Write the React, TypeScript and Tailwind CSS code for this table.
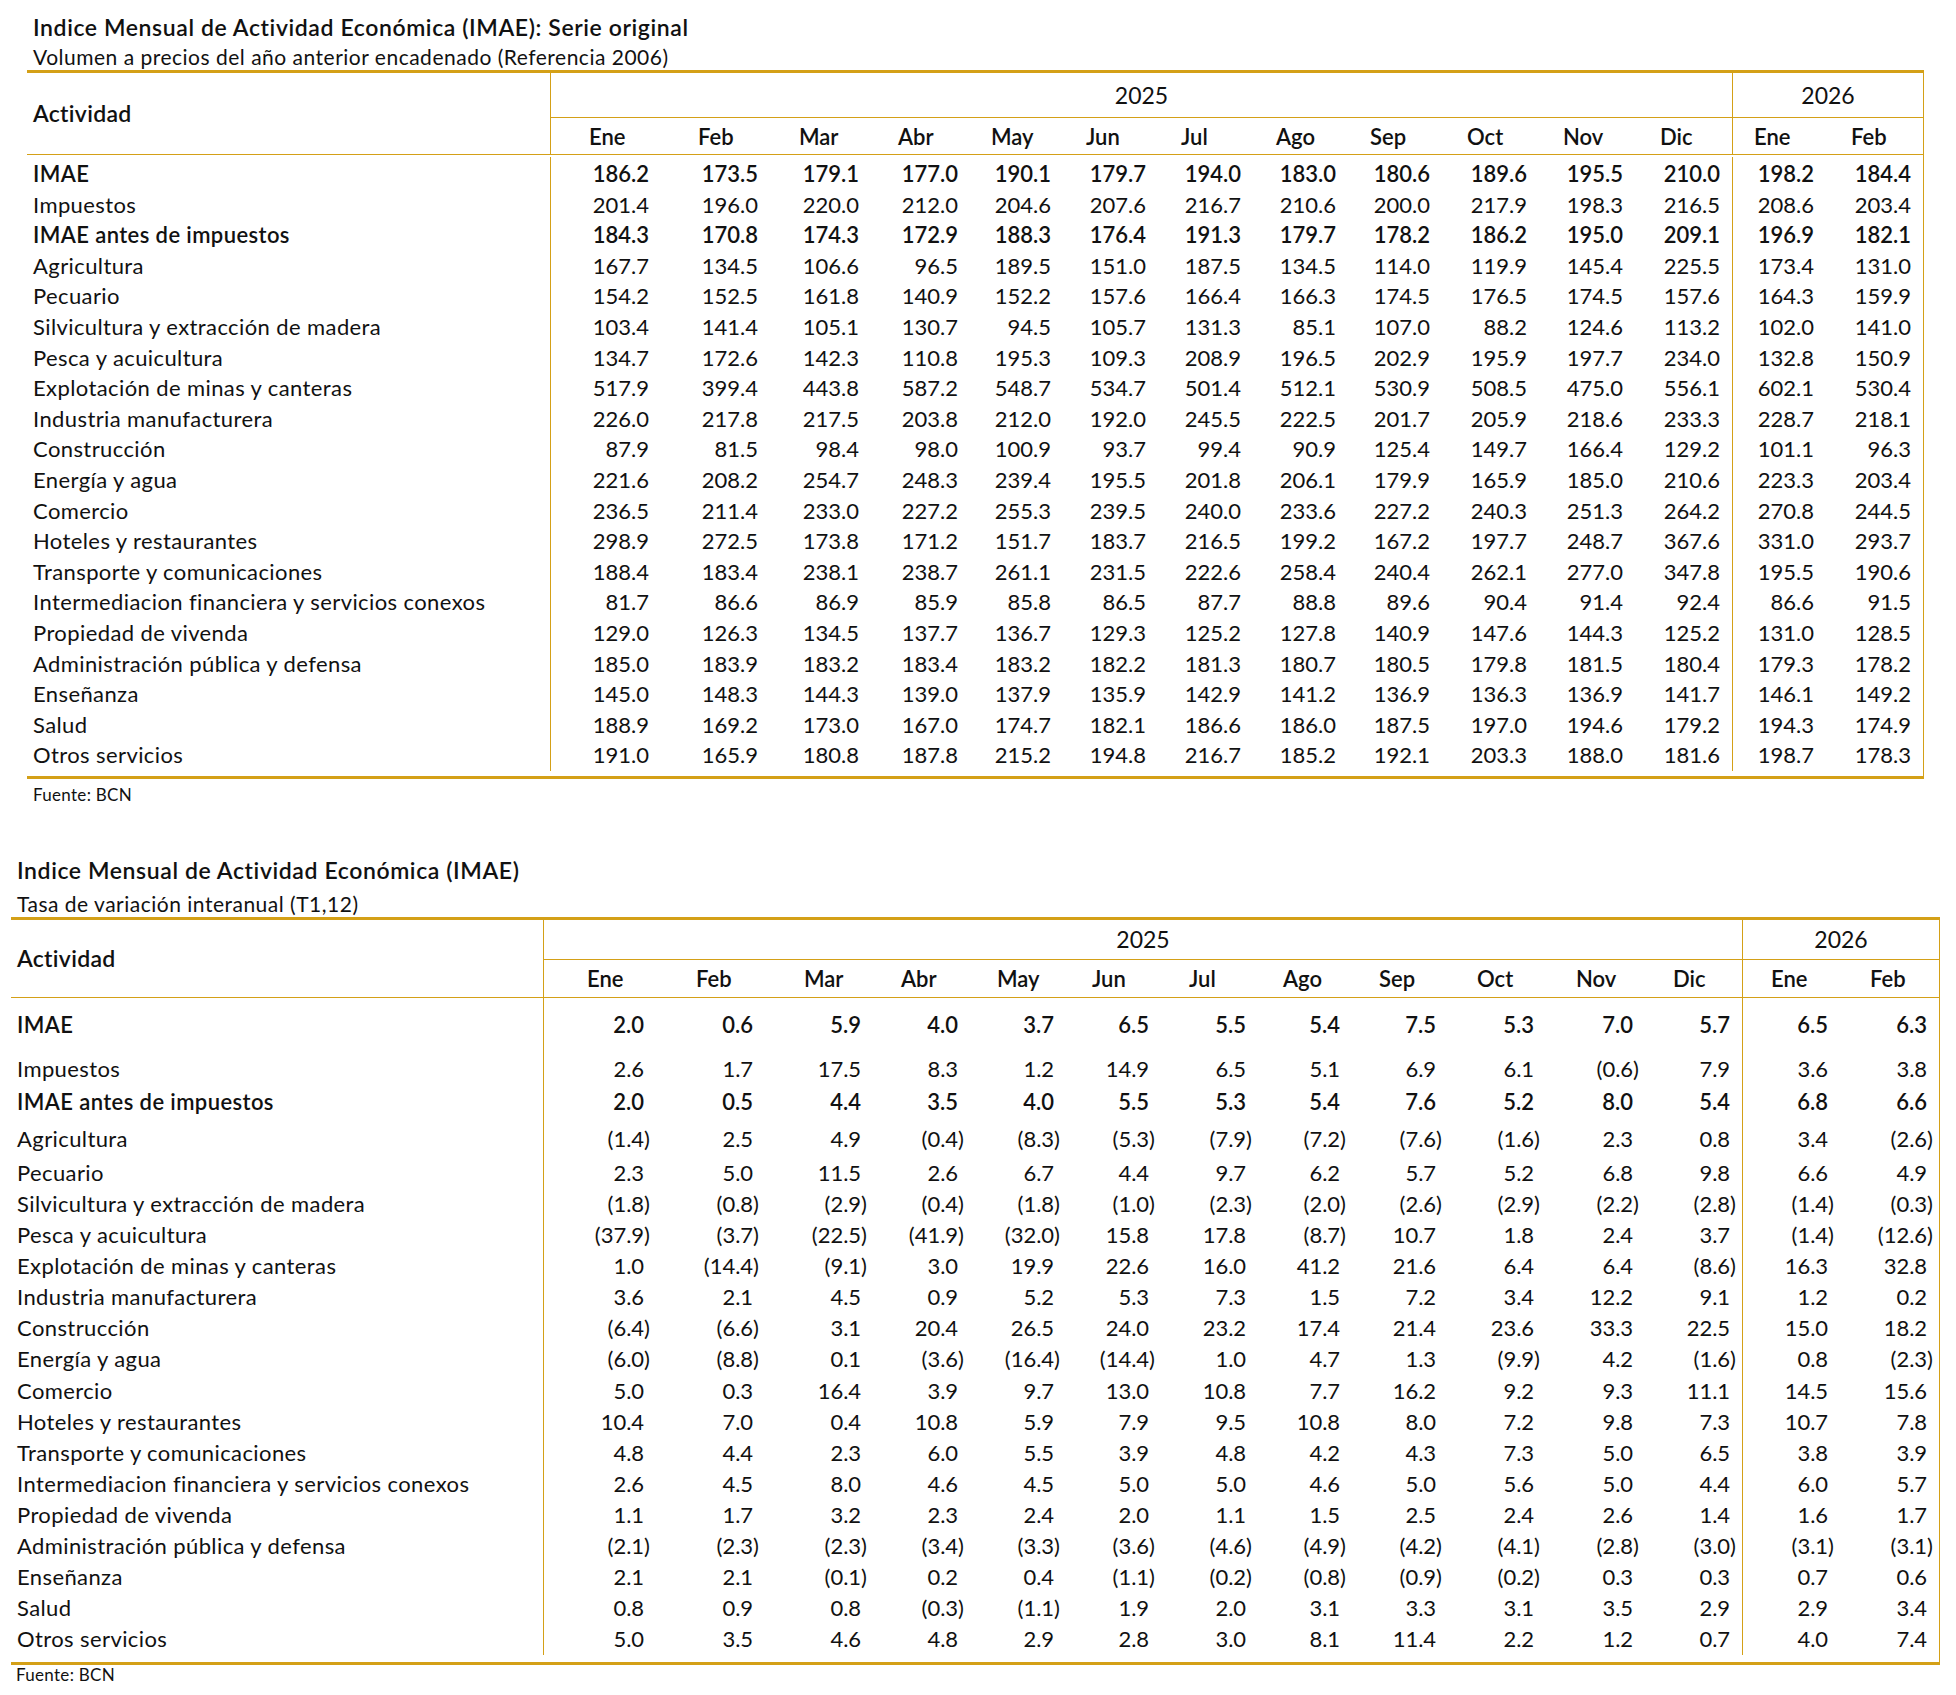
import React from "react";

type Row = { label: string; bold?: boolean; v: string };

const months = ["Ene", "Feb", "Mar", "Abr", "May", "Jun", "Jul", "Ago", "Sep", "Oct", "Nov", "Dic", "Ene", "Feb"];

const serie: Row[] = [
  { label: "IMAE", bold: true, v: "186.2 173.5 179.1 177.0 190.1 179.7 194.0 183.0 180.6 189.6 195.5 210.0 198.2 184.4" },
  { label: "Impuestos", v: "201.4 196.0 220.0 212.0 204.6 207.6 216.7 210.6 200.0 217.9 198.3 216.5 208.6 203.4" },
  { label: "IMAE antes de impuestos", bold: true, v: "184.3 170.8 174.3 172.9 188.3 176.4 191.3 179.7 178.2 186.2 195.0 209.1 196.9 182.1" },
  { label: "Agricultura", v: "167.7 134.5 106.6 96.5 189.5 151.0 187.5 134.5 114.0 119.9 145.4 225.5 173.4 131.0" },
  { label: "Pecuario", v: "154.2 152.5 161.8 140.9 152.2 157.6 166.4 166.3 174.5 176.5 174.5 157.6 164.3 159.9" },
  { label: "Silvicultura y extracción de madera", v: "103.4 141.4 105.1 130.7 94.5 105.7 131.3 85.1 107.0 88.2 124.6 113.2 102.0 141.0" },
  { label: "Pesca y acuicultura", v: "134.7 172.6 142.3 110.8 195.3 109.3 208.9 196.5 202.9 195.9 197.7 234.0 132.8 150.9" },
  { label: "Explotación de minas y canteras", v: "517.9 399.4 443.8 587.2 548.7 534.7 501.4 512.1 530.9 508.5 475.0 556.1 602.1 530.4" },
  { label: "Industria manufacturera", v: "226.0 217.8 217.5 203.8 212.0 192.0 245.5 222.5 201.7 205.9 218.6 233.3 228.7 218.1" },
  { label: "Construcción", v: "87.9 81.5 98.4 98.0 100.9 93.7 99.4 90.9 125.4 149.7 166.4 129.2 101.1 96.3" },
  { label: "Energía y agua", v: "221.6 208.2 254.7 248.3 239.4 195.5 201.8 206.1 179.9 165.9 185.0 210.6 223.3 203.4" },
  { label: "Comercio", v: "236.5 211.4 233.0 227.2 255.3 239.5 240.0 233.6 227.2 240.3 251.3 264.2 270.8 244.5" },
  { label: "Hoteles y restaurantes", v: "298.9 272.5 173.8 171.2 151.7 183.7 216.5 199.2 167.2 197.7 248.7 367.6 331.0 293.7" },
  { label: "Transporte y comunicaciones", v: "188.4 183.4 238.1 238.7 261.1 231.5 222.6 258.4 240.4 262.1 277.0 347.8 195.5 190.6" },
  { label: "Intermediacion financiera y servicios conexos", v: "81.7 86.6 86.9 85.9 85.8 86.5 87.7 88.8 89.6 90.4 91.4 92.4 86.6 91.5" },
  { label: "Propiedad de vivenda", v: "129.0 126.3 134.5 137.7 136.7 129.3 125.2 127.8 140.9 147.6 144.3 125.2 131.0 128.5" },
  { label: "Administración pública y defensa", v: "185.0 183.9 183.2 183.4 183.2 182.2 181.3 180.7 180.5 179.8 181.5 180.4 179.3 178.2" },
  { label: "Enseñanza", v: "145.0 148.3 144.3 139.0 137.9 135.9 142.9 141.2 136.9 136.3 136.9 141.7 146.1 149.2" },
  { label: "Salud", v: "188.9 169.2 173.0 167.0 174.7 182.1 186.6 186.0 187.5 197.0 194.6 179.2 194.3 174.9" },
  { label: "Otros servicios", v: "191.0 165.9 180.8 187.8 215.2 194.8 216.7 185.2 192.1 203.3 188.0 181.6 198.7 178.3" },
];

const tasa: Row[] = [
  { label: "IMAE", bold: true, v: "2.0 0.6 5.9 4.0 3.7 6.5 5.5 5.4 7.5 5.3 7.0 5.7 6.5 6.3" },
  { label: "Impuestos", v: "2.6 1.7 17.5 8.3 1.2 14.9 6.5 5.1 6.9 6.1 (0.6) 7.9 3.6 3.8" },
  { label: "IMAE antes de impuestos", bold: true, v: "2.0 0.5 4.4 3.5 4.0 5.5 5.3 5.4 7.6 5.2 8.0 5.4 6.8 6.6" },
  { label: "Agricultura", v: "(1.4) 2.5 4.9 (0.4) (8.3) (5.3) (7.9) (7.2) (7.6) (1.6) 2.3 0.8 3.4 (2.6)" },
  { label: "Pecuario", v: "2.3 5.0 11.5 2.6 6.7 4.4 9.7 6.2 5.7 5.2 6.8 9.8 6.6 4.9" },
  { label: "Silvicultura y extracción de madera", v: "(1.8) (0.8) (2.9) (0.4) (1.8) (1.0) (2.3) (2.0) (2.6) (2.9) (2.2) (2.8) (1.4) (0.3)" },
  { label: "Pesca y acuicultura", v: "(37.9) (3.7) (22.5) (41.9) (32.0) 15.8 17.8 (8.7) 10.7 1.8 2.4 3.7 (1.4) (12.6)" },
  { label: "Explotación de minas y canteras", v: "1.0 (14.4) (9.1) 3.0 19.9 22.6 16.0 41.2 21.6 6.4 6.4 (8.6) 16.3 32.8" },
  { label: "Industria manufacturera", v: "3.6 2.1 4.5 0.9 5.2 5.3 7.3 1.5 7.2 3.4 12.2 9.1 1.2 0.2" },
  { label: "Construcción", v: "(6.4) (6.6) 3.1 20.4 26.5 24.0 23.2 17.4 21.4 23.6 33.3 22.5 15.0 18.2" },
  { label: "Energía y agua", v: "(6.0) (8.8) 0.1 (3.6) (16.4) (14.4) 1.0 4.7 1.3 (9.9) 4.2 (1.6) 0.8 (2.3)" },
  { label: "Comercio", v: "5.0 0.3 16.4 3.9 9.7 13.0 10.8 7.7 16.2 9.2 9.3 11.1 14.5 15.6" },
  { label: "Hoteles y restaurantes", v: "10.4 7.0 0.4 10.8 5.9 7.9 9.5 10.8 8.0 7.2 9.8 7.3 10.7 7.8" },
  { label: "Transporte y comunicaciones", v: "4.8 4.4 2.3 6.0 5.5 3.9 4.8 4.2 4.3 7.3 5.0 6.5 3.8 3.9" },
  { label: "Intermediacion financiera y servicios conexos", v: "2.6 4.5 8.0 4.6 4.5 5.0 5.0 4.6 5.0 5.6 5.0 4.4 6.0 5.7" },
  { label: "Propiedad de vivenda", v: "1.1 1.7 3.2 2.3 2.4 2.0 1.1 1.5 2.5 2.4 2.6 1.4 1.6 1.7" },
  { label: "Administración pública y defensa", v: "(2.1) (2.3) (2.3) (3.4) (3.3) (3.6) (4.6) (4.9) (4.2) (4.1) (2.8) (3.0) (3.1) (3.1)" },
  { label: "Enseñanza", v: "2.1 2.1 (0.1) 0.2 0.4 (1.1) (0.2) (0.8) (0.9) (0.2) 0.3 0.3 0.7 0.6" },
  { label: "Salud", v: "0.8 0.9 0.8 (0.3) (1.1) 1.9 2.0 3.1 3.3 3.1 3.5 2.9 2.9 3.4" },
  { label: "Otros servicios", v: "5.0 3.5 4.6 4.8 2.9 2.8 3.0 8.1 11.4 2.2 1.2 0.7 4.0 7.4" },
];

type TablaProps = {
  title: string;
  subtitle: string;
  subGap: string;
  rows: Row[];
  cols: string;
  wrap: string;
  headRows: string;
  bodyPad: string;
  rowH: (i: number) => string;
  numPr: string;
  hdW: string;
  paren?: boolean;
};

function Num({ value, paren }: { value: string; paren?: boolean }) {
  if (!paren || value.startsWith("(")) return <>{value}</>;
  return (
    <>
      {value}
      <span className="invisible">)</span>
    </>
  );
}

function Tabla({ title, subtitle, subGap, rows, cols, wrap, headRows, bodyPad, rowH, numPr, hdW, paren }: TablaProps) {
  return (
    <div className={wrap}>
      <div className="pl-[6px] text-[23px] font-semibold leading-[30px] tracking-[0.6px]">{title}</div>
      <div className={`pl-[6px] text-[21px] leading-[27px] tracking-[0.5px] ${subGap}`}>{subtitle}</div>

      <div className="w-fit border-t-[3px] border-b-[3px] border-r border-[#d4a017]">
        {/* cabecera */}
        <div className={`grid ${cols} ${headRows}`}>
          <div className="row-span-2 flex items-center border-b border-[#d4a017] pl-[6px] text-[23px] font-semibold tracking-[0.3px]">
            Actividad
          </div>
          <div className="col-span-12 flex items-center justify-center border-b border-l border-[#d4a017] text-[23px]">
            2025
          </div>
          <div className="col-span-2 flex items-center justify-center border-b border-l border-[#d4a017] text-[23px]">
            2026
          </div>
          {months.map((m, i) => (
            <div
              key={i}
              className={`flex items-center justify-end border-b border-[#d4a017] text-[22px] font-semibold ${numPr} ${
                i === 0 || i === 12 ? "border-l" : ""
              }`}
            >
              <span className={`inline-block text-left ${hdW}`}>{m}</span>
            </div>
          ))}
        </div>

        {/* filas */}
        <div className={bodyPad}>
          {rows.map((r, ri) => (
            <div key={ri} className={`grid ${cols} ${rowH(ri)} ${r.bold ? "font-semibold" : ""}`}>
              <div className="flex items-center pl-[6px] text-[22px] tracking-[0.4px]">{r.label}</div>
              {r.v.split(" ").map((val, ci) => (
                <div
                  key={ci}
                  className={`flex items-center justify-end border-[#d4a017] text-[22px] ${numPr} ${
                    ci === 0 || ci === 12 ? "border-l" : ""
                  }`}
                >
                  <Num value={val} paren={paren} />
                </div>
              ))}
            </div>
          ))}
        </div>
      </div>
    </div>
  );
}

export default function App() {
  return (
    <div className="min-h-[1695px] w-[1956px] bg-white font-['Lato','Noto_Sans',sans-serif] text-[#111]">
      <Tabla
        title="Indice Mensual de Actividad Económica (IMAE): Serie original"
        subtitle="Volumen a precios del año anterior encadenado (Referencia 2006)"
        subGap="mt-[1px]"
        rows={serie}
        wrap="ml-[27px] pt-[12px]"
        cols="grid-cols-[523px_111px_109px_101px_99px_93px_95px_95px_95px_94px_97px_96px_97px_94px_97px]"
        headRows="grid-rows-[45px_37px]"
        bodyPad="pt-[2px] pb-[7px]"
        rowH={() => "h-[30.6px]"}
        numPr="pr-[12px]"
        hdW="w-[60px]"
      />
      <div className="ml-[27px] mt-[6px] pl-[6px] text-[17px] leading-[20px] tracking-[0.3px]">Fuente: BCN</div>

      <Tabla
        title="Indice Mensual de Actividad Económica (IMAE)"
        subtitle="Tasa de variación interanual (T1,12)"
        subGap="mt-[5px]"
        rows={tasa}
        wrap="ml-[11px] mt-[50px]"
        cols="grid-cols-[532px_113px_109px_108px_97px_96px_95px_97px_94px_96px_98px_99px_97px_98px_99px]"
        headRows="grid-rows-[40px_38px]"
        bodyPad="pb-[9px]"
        rowH={(i) => (i === 0 ? "h-[54px]" : i === 1 ? "h-[30px]" : i === 2 ? "h-[40px]" : i === 3 ? "h-[34px]" : "h-[31.1px]")}
        numPr="pr-[6px]"
        hdW="w-[63px]"
        paren
      />
      <div className="ml-[11px] pl-[5px] text-[17px] leading-[20px] tracking-[0.3px]">Fuente: BCN</div>
    </div>
  );
}
